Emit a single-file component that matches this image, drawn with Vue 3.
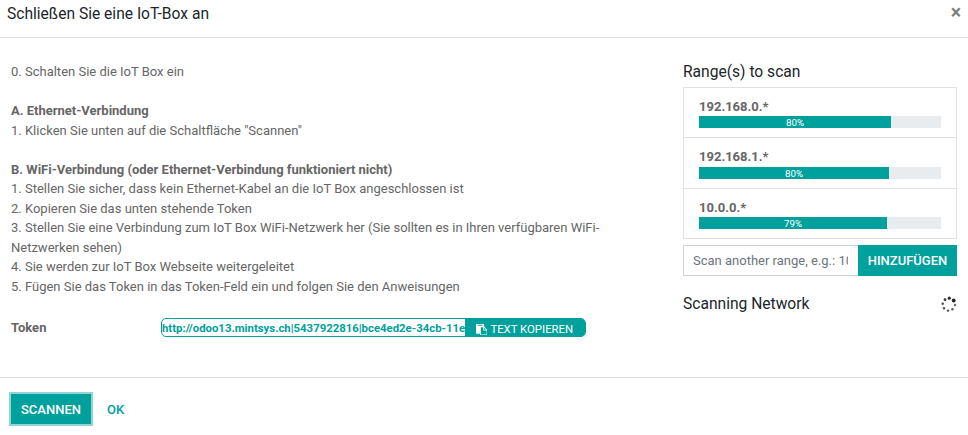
<script setup>
const ranges = [
  { name: '192.168.0.*', label: '80%', width: 79.4 },
  { name: '192.168.1.*', label: '80%', width: 78.6 },
  { name: '10.0.0.*', label: '79%', width: 77.7 },
]
const token = 'http://odoo13.mintsys.ch|5437922816|bce4ed2e-34cb-11e'
const dots = [
  { x: 8.3, y: 2.2, r: 1.6, o: 0.95 },
  { x: 12.7, y: 4.5, r: 1.9, o: 1 },
  { x: 14, y: 9, r: 1.2, o: 0.7 },
  { x: 11.4, y: 13.3, r: 1.2, o: 0.75 },
  { x: 7, y: 14.6, r: 1.2, o: 0.8 },
  { x: 3, y: 12.3, r: 1.2, o: 0.8 },
  { x: 1.7, y: 7.7, r: 1.2, o: 0.85 },
  { x: 4, y: 3.7, r: 1.4, o: 0.9 },
]
</script>

<template>
  <div class="modal">
    <header class="header">
      <h4 class="title">Schließen Sie eine IoT-Box an</h4>
      <button class="close" aria-label="Close">×</button>
    </header>

    <main class="body">
      <section class="steps">
        <div class="text">
          0. Schalten Sie die IoT Box ein<br /><br />
          <strong>A. Ethernet-Verbindung</strong><br />
          1. Klicken Sie unten auf die Schaltfläche "Scannen"<br /><br />
          <strong>B. WiFi-Verbindung (oder Ethernet-Verbindung funktioniert nicht)</strong><br />
          1. Stellen Sie sicher, dass kein Ethernet-Kabel an die IoT Box angeschlossen ist<br />
          2. Kopieren Sie das unten stehende Token<br />
          3. Stellen Sie eine Verbindung zum IoT Box WiFi-Netzwerk her (Sie sollten es in Ihren verfügbaren WiFi-<br />
          Netzwerken sehen)<br />
          4. Sie werden zur IoT Box Webseite weitergeleitet<br />
          5. Fügen Sie das Token in das Token-Feld ein und folgen Sie den Anweisungen
        </div>
        <div class="token-row">
          <strong class="token-label">Token</strong>
          <div class="clip">
            <span class="token">{{ token }}</span>
            <button class="copy">
              <svg class="paste" viewBox="0 0 1792 1792">
                <path fill="currentColor" d="M768 1664h896v-640h-416q-40 0-68-28t-28-68v-416h-384v1152zm256-1440v-64q0-13-9.5-22.5t-22.5-9.5h-704q-13 0-22.5 9.5t-9.5 22.5v64q0 13 9.5 22.5t22.5 9.5h704q13 0 22.5-9.5t9.5-22.5zm256 672h299l-299-299v299zm512 128v672q0 40-28 68t-68 28h-960q-40 0-68-28t-28-68v-160h-544q-40 0-68-28t-28-68v-1344q0-40 28-68t68-28h1088q40 0 68 28t28 68v328q21 13 36 28l408 408q28 28 48 76t20 88z" />
              </svg>
              <span>TEXT KOPIEREN</span>
            </button>
          </div>
        </div>
      </section>

      <aside class="scan">
        <h4 class="title">Range(s) to scan</h4>
        <ul class="list">
          <li v-for="r in ranges" :key="r.name" class="item">
            <strong class="name">{{ r.name }}</strong>
            <div class="progress">
              <div class="bar" :style="{ width: r.width + '%' }">{{ r.label }}</div>
            </div>
          </li>
        </ul>
        <div class="add">
          <input class="input" type="text" placeholder="Scan another range, e.g.: 10.1.1.*" />
          <button class="btn add-btn">HINZUFÜGEN</button>
        </div>
        <div class="status">
          <h4 class="title">Scanning Network</h4>
          <svg class="spinner" viewBox="0 0 16 16">
            <circle v-for="(d, i) in dots" :key="i" :cx="d.x" :cy="d.y" :r="d.r" :opacity="d.o" fill="#212529" />
          </svg>
        </div>
      </aside>
    </main>

    <footer class="footer">
      <button class="btn scan-btn">SCANNEN</button>
      <button class="btn link">OK</button>
    </footer>
  </div>
</template>

<style>
body {
  margin: 0;
  background: #fff;
}
</style>

<style scoped>
.modal,
.modal * {
  box-sizing: border-box;
}
.modal {
  width: 968px;
  height: 435px;
  overflow: hidden;
  display: flex;
  flex-direction: column;
  font: 13px/19.5px Roboto, sans-serif;
  color: #666;
}
strong {
  font-weight: 700;
}
button {
  font-family: inherit;
  border: 0;
  padding: 0;
  margin: 0;
}
.title {
  margin: 0;
  font-size: 15.6px;
  line-height: 20px;
  font-weight: 400;
  color: #212529;
}
.header {
  height: 38px;
  flex: none;
  display: flex;
  justify-content: space-between;
  align-items: flex-start;
  padding: 4px 7px 0 7px;
  border-bottom: 1px solid #dee2e6;
}
.close {
  background: none;
  font-size: 19.5px;
  line-height: 18px;
  font-weight: 700;
  color: #7f7f7f;
}
.body {
  height: 339px;
  flex: none;
  display: flex;
  justify-content: space-between;
  padding: 24px 11px 0;
}
.steps {
  width: 610px;
}
.text {
  white-space: nowrap;
}
.token-row {
  display: flex;
  align-items: center;
  margin-top: 22px;
}
.token-label {
  width: 150px;
}
.clip {
  display: flex;
  width: 425px;
  height: 19px;
  border: 1px solid #00a09d;
  border-radius: 5px;
  overflow: hidden;
}
.token {
  width: 303px;
  overflow: hidden;
  white-space: nowrap;
  font-size: 11.375px;
  line-height: 18px;
  font-weight: 700;
  color: #00a09d;
}
.copy {
  flex: 1;
  display: flex;
  align-items: center;
  padding: 3px 0 0 11px;
  gap: 3px;
  background: #00a09d;
  color: #fff;
  font-size: 11.375px;
  line-height: 17px;
  white-space: nowrap;
}
.paste {
  width: 11.375px;
  height: 11.375px;
}
.scan {
  width: 274px;
}
.list {
  list-style: none;
  margin: 5px 0 0;
  padding: 0;
  border: 1px solid #dee2e6;
}
.item {
  height: 49.3px;
  padding: 9px 15px 0;
}
.item + .item {
  height: 50.3px;
  border-top: 1px solid #dee2e6;
}
.name {
  display: block;
  height: 19.3px;
}
.progress {
  height: 12px;
  background: #e9ecef;
}
.bar {
  height: 12px;
  background: #00a09d;
  color: #fff;
  font-size: 9.75px;
  line-height: 13px;
  text-align: center;
}
.add {
  display: flex;
  margin-top: 6px;
  height: 31px;
}
.input {
  width: 175px;
  padding: 0 10px 0 9px;
  border: 1px solid #ced4da;
  border-right: 0;
  border-radius: 0;
  font: 13px/19.5px Roboto, sans-serif;
  background: #fff;
}
.input::placeholder {
  color: #6c757d;
  opacity: 1;
}
.btn {
  font-size: 13px;
  font-weight: 500;
  background: #00a09d;
  color: #fff;
  height: 31px;
}
.add-btn {
  flex: 1;
}
.status {
  display: flex;
  justify-content: space-between;
  align-items: center;
  margin-top: 18px;
}
.spinner {
  width: 16px;
  height: 16px;
}
.footer {
  flex: 1;
  display: flex;
  align-items: flex-start;
  gap: 16px;
  padding: 16px 11px 0;
  border-top: 1px solid #dee2e6;
}
.scan-btn {
  width: 80px;
  height: 30px;
  box-shadow: 0 0 0 2px #90d5d4;
}
.link {
  background: none;
  color: #00a09d;
}
</style>
